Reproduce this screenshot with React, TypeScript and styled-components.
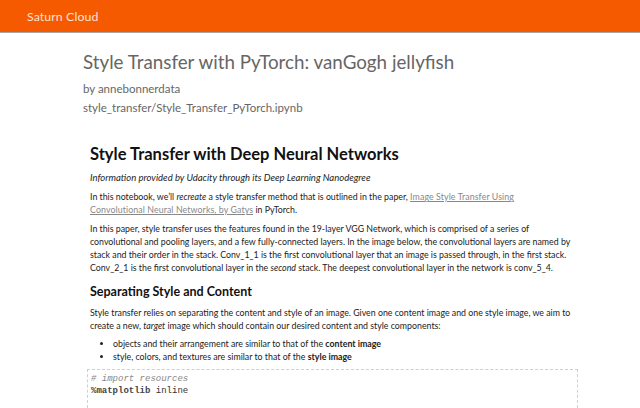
import React from "react";
import styled, { createGlobalStyle } from "styled-components";

const Global = createGlobalStyle`
  html, body { margin: 0; padding: 0; background: #fff; }
  body { font-family: Lato, "Open Sans", sans-serif; overflow: hidden; }
`;

const Header = styled.header`
  height: 32px;
  background: #f55a00;
  border-bottom: 1px solid #a8a8a8;
  display: flex;
  align-items: center;
  padding-left: 27px;
  box-sizing: content-box;
`;

const Brand = styled.span`
  color: #fbe3d4;
  font-size: 12.3px;
  letter-spacing: 0.1px;
`;

const Main = styled.main`
  padding: 16px 0 0 83px;
`;

const Title = styled.h1`
  margin: 0;
  font-size: 18.8px;
  font-weight: 400;
  color: #666;
  line-height: 26px;
`;

const Meta = styled.div<{ $first?: boolean }>`
  font-size: 11.5px;
  color: #666;
  line-height: 19px;
  margin-top: ${(p) => (p.$first ? "4px" : "0")};
`;

const Notebook = styled.div`
  width: 495px;
  margin-top: 25px;
`;

const Cell = styled.div`
  padding: 0 5px 0 7px;
  color: #222;
  font-size: 8.8px;
  line-height: 13px;
`;

const H1 = styled.h2`
  margin: 0 0 5px;
  font-size: 16.5px;
  font-weight: 700;
  color: #111;
  line-height: 24px;
`;

const H2 = styled.h3`
  margin: 9px 0 5px;
  font-size: 12.5px;
  font-weight: 700;
  color: #111;
  line-height: 18px;
`;

const P = styled.p`
  margin: 0 0 6px;
`;

const Lead = styled.em`
  font-size: 9.5px;
`;

const Link = styled.a`
  color: #888;
  text-decoration: underline;
  letter-spacing: 0.1px;
`;

const Keep = styled.span`
  white-space: nowrap;
`;

const List = styled.ul`
  margin: -1px 0 6px;
  padding-left: 23px;
`;

const Code = styled.pre`
  margin: 0 0 0 4px;
  border: 1px dashed #cfcfcf;
  padding: 3px 3px 0;
  font-family: "Liberation Mono", "DejaVu Sans Mono", monospace;
  font-size: 9px;
  line-height: 12px;
  color: #333;
  height: 60px;
  overflow: hidden;
`;

const Comment = styled.span`
  color: #888;
  font-style: italic;
`;

const Magic = styled.span`
  color: #444;
  font-weight: 700;
`;

export default function App() {
  return (
    <>
      <Global />
      <Header>
        <Brand>Saturn Cloud</Brand>
      </Header>
      <Main>
        <Title>Style Transfer with PyTorch: vanGogh jellyfish</Title>
        <Meta $first>by annebonnerdata</Meta>
        <Meta>style_transfer/Style_Transfer_PyTorch.ipynb</Meta>
        <Notebook>
          <Cell>
            <H1>Style Transfer with Deep Neural Networks</H1>
            <P>
              <Lead>Information provided by Udacity through its Deep Learning Nanodegree</Lead>
            </P>
            <P>
              In this notebook, we’ll <em>recreate</em> a style transfer method that is outlined in the paper,{" "}
              <Link>
                Image Style Transfer Using <Keep>Convolutional Neural Networks, by Gatys</Keep>
              </Link>{" "}
              in PyTorch.
            </P>
            <P>
              In this paper, style transfer uses the features found in the 19-layer VGG Network, which is comprised
              of a series of convolutional and pooling layers, and a few fully-connected layers. In the image below,
              the convolutional layers are named by stack and their order in the stack. Conv_1_1 is the first
              convolutional layer that an image is passed through, in the first stack. Conv_2_1 is the first
              convolutional layer in the <em>second</em> stack. The deepest convolutional layer in the network is
              conv_5_4.
            </P>
            <H2>Separating Style and Content</H2>
            <P>
              Style transfer relies on separating the content and style of an image. Given one content image and one
              style image, we aim to create a new, <em>target</em> image which should contain our desired content and
              style components:
            </P>
            <List>
              <li>
                objects and their arrangement are similar to that of the <strong>content image</strong>
              </li>
              <li>
                style, colors, and textures are similar to that of the <strong>style image</strong>
              </li>
            </List>
          </Cell>
          <Code>
            <Comment># import resources</Comment>
            {"\n"}
            <Magic>%matplotlib</Magic> inline
            {"\n\n"}
            <Magic>from</Magic> PIL <Magic>import</Magic> Image
          </Code>
        </Notebook>
      </Main>
    </>
  );
}
